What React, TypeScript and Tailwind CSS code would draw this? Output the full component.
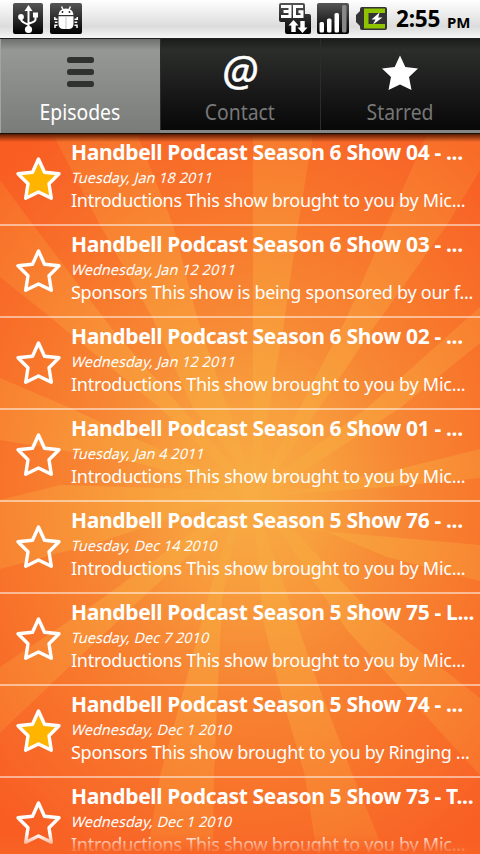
import type { ReactNode } from "react";
import clsx from "clsx";

type Episode = {
  title: string;
  date: string;
  summary: string;
  starred?: boolean;
};

const INTRO = "Introductions This show brought to you by Mic...";

const EPISODES: Episode[] = [
  {
    title: "Handbell Podcast Season 6 Show 04 - ...",
    date: "Tuesday, Jan 18 2011",
    summary: INTRO,
    starred: true,
  },
  {
    title: "Handbell Podcast Season 6 Show 03 - ...",
    date: "Wednesday, Jan 12 2011",
    summary: "Sponsors This show is being sponsored by our f...",
  },
  {
    title: "Handbell Podcast Season 6 Show 02 - ...",
    date: "Wednesday, Jan 12 2011",
    summary: INTRO,
  },
  {
    title: "Handbell Podcast Season 6 Show 01 - ...",
    date: "Tuesday, Jan 4 2011",
    summary: INTRO,
  },
  {
    title: "Handbell Podcast Season 5 Show 76 - ...",
    date: "Tuesday, Dec 14 2010",
    summary: INTRO,
  },
  {
    title: "Handbell Podcast Season 5 Show 75 - L...",
    date: "Tuesday, Dec 7 2010",
    summary: INTRO,
  },
  {
    title: "Handbell Podcast Season 5 Show 74 - ...",
    date: "Wednesday, Dec 1 2010",
    summary: "Sponsors This show brought to you by Ringing ...",
    starred: true,
  },
  {
    title: "Handbell Podcast Season 5 Show 73 - T...",
    date: "Wednesday, Dec 1 2010",
    summary: INTRO,
  },
];

// Sun rays, all meeting around (252, 492)
const RAYS = [
  "53,134 137,134 173,225 197,317 252,480 193,408 152,317 100,225",
  "253,134 313,134 298,225 283,330 256,480 253,480",
  "427,134 480,134 480,170 447,225 372,330 270,480 262,480 347,317 387,225",
  "480,307 480,343 400,408 275,490 270,480 367,408",
  "480,449 480,478 387,487 275,495 387,472",
  "480,545 480,581 387,557 275,510 310,530",
  "480,698 480,775 347,630 265,510 275,510 370,612",
  "317,854 385,854 353,776 320,690 258,510 254,510 263,620 280,690 305,776",
  "147,854 213,854 214,776 218,685 222,600 240,510 236,510 210,590 185,685 160,776",
  "0,667 100,600 230,505 235,512 140,600 50,685 0,733",
  "0,500 60,485 225,490 225,500 100,542 0,569",
  "0,378 70,408 230,482 225,486 133,462 0,440",
  "0,180 33,225 113,330 245,480 235,480 160,408 50,317 0,277",
];

const Background = () => (
  <svg
    className="absolute inset-x-0 bottom-0 h-[720px] w-[480px]"
    viewBox="0 134 480 720"
  >
    <defs>
      <radialGradient
        id="base"
        gradientUnits="userSpaceOnUse"
        cx="0"
        cy="0"
        r="1"
        gradientTransform="translate(250 492) scale(365 440)"
      >
        <stop offset="0" stopColor="#f8ad43" />
        <stop offset="0.2" stopColor="#f89f3e" />
        <stop offset="0.42" stopColor="#f78734" />
        <stop offset="0.65" stopColor="#f8762b" />
        <stop offset="0.85" stopColor="#f86828" />
        <stop offset="1" stopColor="#f95d22" />
      </radialGradient>
      <radialGradient
        id="ray"
        gradientUnits="userSpaceOnUse"
        cx="0"
        cy="0"
        r="1"
        gradientTransform="translate(250 492) scale(365 440)"
      >
        <stop offset="0" stopColor="#f8ad43" />
        <stop offset="0.25" stopColor="#f8a33d" />
        <stop offset="0.48" stopColor="#f89438" />
        <stop offset="0.7" stopColor="#f88331" />
        <stop offset="0.88" stopColor="#f8752c" />
        <stop offset="1" stopColor="#f86b28" />
      </radialGradient>
    </defs>
    <rect y="134" width="480" height="720" fill="url(#base)" />
    {RAYS.map((points) => (
      <polygon key={points} points={points} fill="url(#ray)" />
    ))}
  </svg>
);

const StarOutline = ({ filled }: { filled?: boolean }) => (
  <svg className="h-[46px] w-[46px]" viewBox="0 0 46 46">
    <path
      d="M23.500 3 L29.500 16.200 L44 17.800 L34 27.700 L36.300 42.300 L23.500 36 L10.700 42.300 L13 27.700 L3 17.800 L17.500 16.200 Z"
      fill={filled ? "#ffb400" : "none"}
      stroke="#fff"
      strokeWidth="3.4"
      strokeLinejoin="round"
    />
  </svg>
);

const StatusBar = () => (
  <header className="flex h-[38px] items-center bg-linear-to-b from-white via-[#dcdcdc] via-70% to-[#f6f6f6] pl-[13px] text-black">
    <svg className="mr-[7px] h-8 w-[30px]" viewBox="0 0 30 32">
      <defs>
        <linearGradient id="tile" x1="0" y1="0" x2="0" y2="1">
          <stop offset="0" stopColor="#555" />
          <stop offset="1" stopColor="#000" />
        </linearGradient>
      </defs>
      <rect width="30" height="31" rx="2" fill="url(#tile)" />
      <g fill="#fff">
        <path d="M15.500 2 L19.500 8 H11.500 Z" />
        <circle cx="15.500" cy="26.500" r="3.600" />
        <circle cx="8" cy="14" r="2.900" />
        <rect x="20" y="9.500" width="5" height="5" />
      </g>
      <path
        d="M15.500 6 V25 M8 14 V16.500 Q8.500 19 15 21.500 M22.500 13 V16.500 Q22 19 16 20.500"
        fill="none"
        stroke="#fff"
        strokeWidth="2"
      />
    </svg>
    <svg className="h-8 w-8" viewBox="0 0 32 32">
      <rect width="32" height="31" rx="2" fill="url(#tile)" />
      <g fill="#fff">
        <path d="M8.500 12 Q9 5.500 16 5.500 Q23 5.500 23.500 12 Z" />
        <path d="M8.500 13.200 H23.500 V21 Q23.500 26 18.500 26 H13.500 Q8.500 26 8.500 21 Z" />
      </g>
      <path
        d="M11.500 3.500 L13 6.500 M20.500 3.500 L19 6.500 M4.800 14 V16.300 H7.500 M4.800 19.300 H7.500 M5 25 V22.300 H7.500 M27.200 14 V16.300 H24.500 M27.200 19.300 H24.500 M27 25 V22.300 H24.500"
        fill="none"
        stroke="#fff"
        strokeWidth="1.500"
      />
      <path d="M16 13.200 V26" stroke="#ccc" strokeWidth="1.200" />
      <circle cx="12.500" cy="9" r="0.900" fill="#222" />
      <circle cx="19.500" cy="9" r="0.900" fill="#222" />
    </svg>

    <div className="ml-auto flex items-center">
      <svg className="h-8 w-8" viewBox="0 0 32 32">
        <path
          d="M2 0 H24 Q26 0 26 2 V11 H30 Q32 11 32 13 V29 Q32 31 30 31 H8 Q6 31 6 29 V19 H2 Q0 19 0 17 V2 Q0 0 2 0 Z"
          fill="url(#tile)"
        />
        <path
          d="M2 3.500 H11 V13.500 H2 M4.500 8.500 H11 M24 3.500 H15.500 V13.500 H23 V8.700 H19.500"
          fill="none"
          stroke="#fff"
          strokeWidth="3"
        />
        <path
          d="M14.500 17 L19.500 22.500 H16.700 V29 H12.300 V22.500 H9.500 Z M23.500 30 L28.500 24.500 H25.700 V18 H21.300 V24.500 H18.500 Z"
          fill="#fff"
        />
      </svg>
      <svg className="ml-[6px] h-8 w-8" viewBox="0 0 32 32">
        <rect width="32" height="31" rx="2" fill="url(#tile)" />
        <rect x="2.500" y="19" width="4.500" height="10.500" rx="1.500" fill="#fff" />
        <rect x="10" y="15.500" width="4.500" height="14" rx="1.500" fill="#fff" />
        <rect x="17.500" y="10" width="4.500" height="19.500" rx="1.500" fill="#fff" />
        <rect x="25" y="2" width="4.500" height="27.500" rx="1.500" fill="#888" />
      </svg>
      <svg className="ml-[6px] h-6 w-8" viewBox="0 0 32 24">
        <path
          d="M7 0 H30 Q32 0 32 2 V21 Q32 23 30 23 H7 Q5 23 5 21 V19 L1 15 V8 L5 4 V2 Q5 0 7 0 Z"
          fill="#333"
        />
        <path
          d="M9 1.500 H30 V6 H13.500 V17 H30 V21.500 H9 Z"
          fill="#8fc400"
        />
        <path
          d="M24.500 5.500 L16.500 12.500 H20.500 L18 17.500 L27.500 10.500 H23.300 Z"
          fill="#fff"
        />
      </svg>
      <div className="ml-[9px] flex w-[84px] items-baseline font-bold whitespace-nowrap">
        <span className="w-[51px] text-[23px] leading-[30px] tracking-[-0.2px]">
          <span className="inline-block origin-left scale-x-[0.98]">2:55</span>
        </span>
        <span className="relative top-px text-[15px] leading-[30px]">PM</span>
      </div>
    </div>
  </header>
);

type TabProps = {
  label: string;
  active?: boolean;
  children: ReactNode;
};

const Tab = ({ label, active, children }: TabProps) => (
  <button
    className={clsx(
      "flex w-40 flex-col items-center border-l pr-px",
      active
        ? "h-[94px] border-[#a2a4a2] bg-linear-to-b from-[#6d706c] via-[#969896] via-12% to-[#7a7c7a] text-white"
        : "h-[91px] border-[#2b2d2b] bg-linear-to-b from-[#1b1d1b] via-[#2c2e2c] via-12% to-[#080808] text-[#777]",
    )}
  >
    <span className="flex h-[66px] w-full items-center justify-center">
      {children}
    </span>
    <span className="-mt-2 origin-center scale-x-[0.88] text-[22px] leading-7 whitespace-nowrap">
      {label}
    </span>
  </button>
);

const App = () => {
  return (
    <div className="flex h-[854px] w-[480px] flex-col overflow-hidden bg-[#f8742a] font-['Noto_Sans',sans-serif]">
      <StatusBar />

      <nav className="flex h-[97px] items-start border-t border-b-2 border-t-[#222] border-b-[#1a0c06] bg-[#868886]">
        <Tab label="Episodes" active>
          <svg className="h-[30px] w-7" viewBox="0 0 28 30">
            <g fill="#303230">
              <rect x="1" y="0" width="27" height="6" rx="2.500" />
              <rect x="1" y="12" width="27" height="6" rx="2.500" />
              <rect x="1" y="24" width="27" height="6" rx="2.500" />
            </g>
          </svg>
        </Tab>
        <Tab label="Contact">
          <span className="-mt-1 text-[42px] leading-10 text-white italic [-webkit-text-stroke:0.5px_white]">
            @
          </span>
        </Tab>
        <Tab label="Starred">
          <svg className="mt-0.5 h-9 w-9" viewBox="0 0 36 36">
            <path
              d="M18 0.500 L23.300 12 L36 13.500 L27 22 L29.500 35 L18 29.500 L6.500 35 L9 22 L0 13.500 L12.700 12 Z"
              fill="#fff"
            />
          </svg>
        </Tab>
      </nav>

      {/* Episode list */}
      <main className="relative -mt-px h-[720px] overflow-hidden">
        <Background />
        <ul className="relative">
          {EPISODES.map((episode) => (
            <li
              key={episode.title}
              className="flex h-[92px] border-b-2 border-white/50 text-white"
            >
              <div className="w-[71px] shrink-0 pt-[22px] pl-[15px]">
                <StarOutline filled={episode.starred} />
              </div>
              <div className="pt-1 whitespace-nowrap">
                <h2 className="text-[21px] leading-7 font-bold tracking-[-0.34px]">
                  {episode.title}
                </h2>
                <p className="mt-px ml-px w-max -skew-x-[14deg] text-[14.5px] leading-5">
                  {episode.date}
                </p>
                <p className="mt-px text-[18px] leading-[25px] tracking-[-0.27px]">
                  {episode.summary}
                </p>
              </div>
            </li>
          ))}
        </ul>
        <div className="absolute inset-x-0 top-0 h-2 bg-linear-to-b from-[#5a1c04] to-transparent" />
        <div className="absolute inset-x-0 bottom-0 h-5 bg-linear-to-b from-transparent to-[#f86425]" />
      </main>
    </div>
  );
};

export default App;
